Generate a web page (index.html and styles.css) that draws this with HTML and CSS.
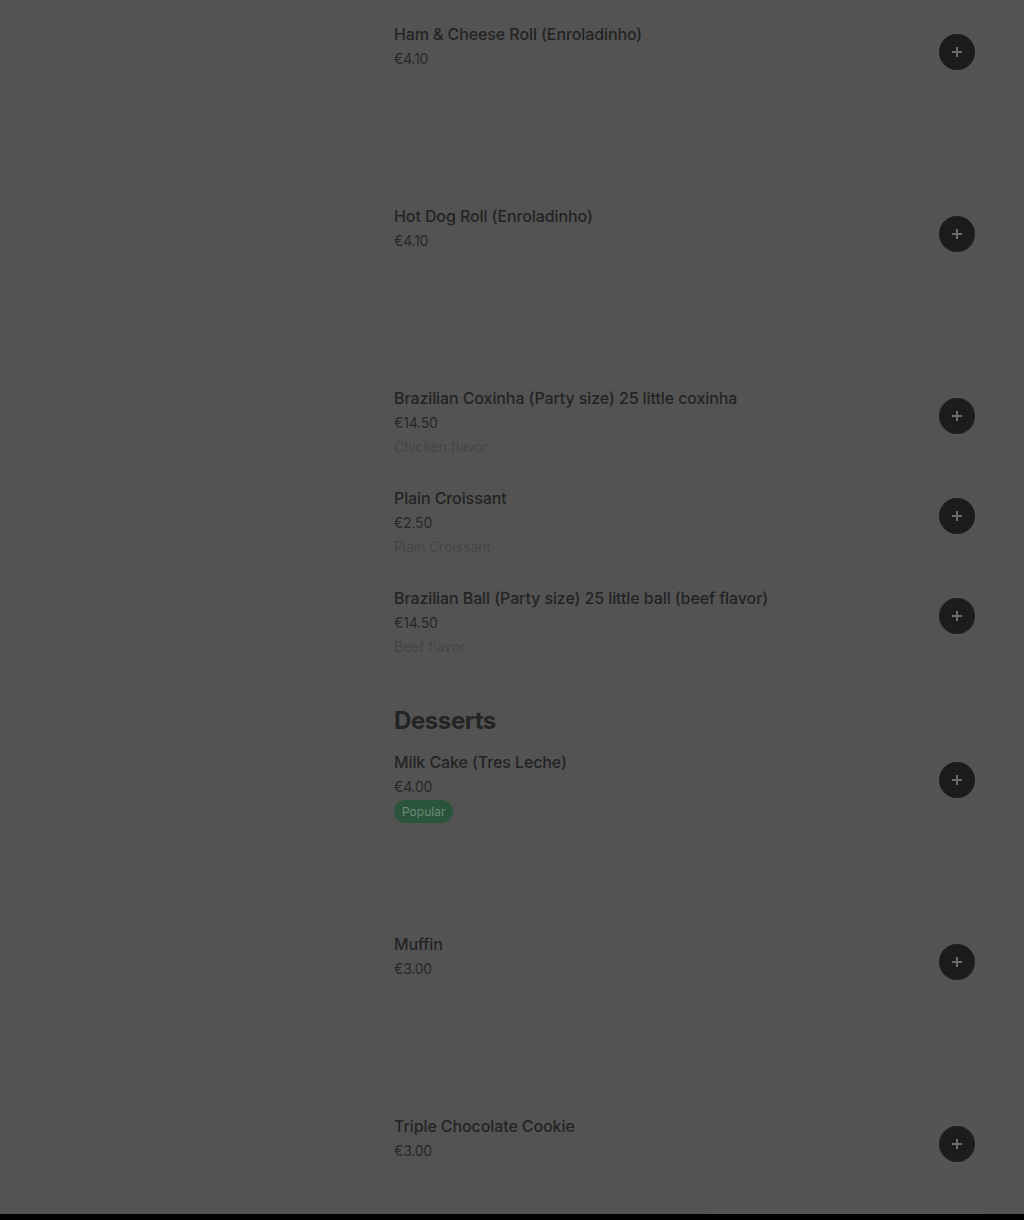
FILE: index.html
```html
<!DOCTYPE html>
<html lang="en">
  <head>
    <meta charset="UTF-8" />
    <meta name="viewport" content="width=device-width, initial-scale=1.0" />
    <title>Menu</title>
    <link rel="stylesheet" href="styles.css">
  </head>
  <body>
    <div class="page">
      <aside class="side"></aside>

      <main class="menu">
        <div class="item">
          <div class="info">
            <div class="name">Ham &amp; Cheese Roll (Enroladinho)</div>
            <div class="price">€4.10</div>
          </div>
          <div class="thumb">
            <button class="add"><svg viewBox="0 0 12 12"><path d="M6 1v10M1 6h10" /></svg></button>
          </div>
        </div>

        <div class="item">
          <div class="info">
            <div class="name">Hot Dog Roll (Enroladinho)</div>
            <div class="price">€4.10</div>
          </div>
          <div class="thumb">
            <button class="add"><svg viewBox="0 0 12 12"><path d="M6 1v10M1 6h10" /></svg></button>
          </div>
        </div>

        <div class="item">
          <div class="info">
            <div class="name">Brazilian Coxinha (Party size) 25 little coxinha</div>
            <div class="price">€14.50</div>
            <div class="desc">Chicken flavor</div>
          </div>
          <div class="no-thumb">
            <button class="add"><svg viewBox="0 0 12 12"><path d="M6 1v10M1 6h10" /></svg></button>
          </div>
        </div>

        <div class="item">
          <div class="info">
            <div class="name">Plain Croissant</div>
            <div class="price">€2.50</div>
            <div class="desc">Plain Croissant</div>
          </div>
          <div class="no-thumb">
            <button class="add"><svg viewBox="0 0 12 12"><path d="M6 1v10M1 6h10" /></svg></button>
          </div>
        </div>

        <div class="item">
          <div class="info">
            <div class="name">Brazilian Ball (Party size) 25 little ball (beef flavor)</div>
            <div class="price">€14.50</div>
            <div class="desc">Beef flavor</div>
          </div>
          <div class="no-thumb">
            <button class="add"><svg viewBox="0 0 12 12"><path d="M6 1v10M1 6h10" /></svg></button>
          </div>
        </div>

        <h2 class="section">Desserts</h2>

        <div class="item">
          <div class="info">
            <div class="name">Milk Cake (Tres Leche)</div>
            <div class="price">€4.00</div>
            <span class="badge">Popular</span>
          </div>
          <div class="thumb">
            <button class="add"><svg viewBox="0 0 12 12"><path d="M6 1v10M1 6h10" /></svg></button>
          </div>
        </div>

        <div class="item">
          <div class="info">
            <div class="name">Muffin</div>
            <div class="price">€3.00</div>
          </div>
          <div class="thumb">
            <button class="add"><svg viewBox="0 0 12 12"><path d="M6 1v10M1 6h10" /></svg></button>
          </div>
        </div>

        <div class="item">
          <div class="info">
            <div class="name">Triple Chocolate Cookie</div>
            <div class="price">€3.00</div>
          </div>
          <div class="thumb">
            <button class="add"><svg viewBox="0 0 12 12"><path d="M6 1v10M1 6h10" /></svg></button>
          </div>
        </div>
      </main>
    </div>

    <div class="bottom-bar"></div>
  </body>
</html>
```

FILE: styles.css
```css
body {
  margin: 0;
  background-color: #535353;
  font-family: Inter, "Noto Sans", sans-serif;
  color: #222;
  height: 1220px;
  overflow: hidden;
}

.page {
  display: flex;
  padding-top: 8px;
}

.side {
  width: 394px;
  flex-shrink: 0;
}

.menu {
  width: 590px;
}

.item {
  display: flex;
  justify-content: space-between;
  padding: 14px 0;
}

.info {
  flex: 1;
  min-width: 0;
  display: flex;
  flex-direction: column;
  align-items: flex-start;
}

.name {
  font-size: 16px;
  font-weight: 500;
  line-height: 24px;
  color: #232323;
  letter-spacing: -0.1px;
  white-space: nowrap;
}

.price {
  font-size: 14px;
  line-height: 25px;
  color: #282828;
  letter-spacing: -0.2px;
}

.desc {
  font-size: 14px;
  line-height: 23px;
  color: #454545;
  letter-spacing: -0.1px;
}

.badge {
  margin-top: 1px;
  height: 23px;
  line-height: 23px;
  padding: 0 8px;
  border-radius: 12px;
  background-color: #2a553c;
  color: #6c8a76;
  font-size: 12px;
}

.thumb {
  position: relative;
  flex-shrink: 0;
  width: 274px;
  height: 154px;
  background-color: #545454;
  border-radius: 2px;
}

.no-thumb {
  position: relative;
  width: 0;
}

.add {
  position: absolute;
  top: 12px;
  right: 9px;
  width: 36px;
  height: 36px;
  border: none;
  border-radius: 50%;
  background-color: #1c1c1c;
  padding: 0;
  display: flex;
  align-items: center;
  justify-content: center;
}

.add svg {
  width: 12px;
  height: 12px;
  stroke: #6b6b6b;
  stroke-width: 2;
}

.section {
  margin: 33px 0 -1px;
  font-size: 24px;
  line-height: 32px;
  font-weight: 700;
  color: #242424;
  letter-spacing: -0.4px;
}

.bottom-bar {
  position: fixed;
  left: 0;
  right: 0;
  bottom: 0;
  height: 6px;
  background-color: #000;
}
```
